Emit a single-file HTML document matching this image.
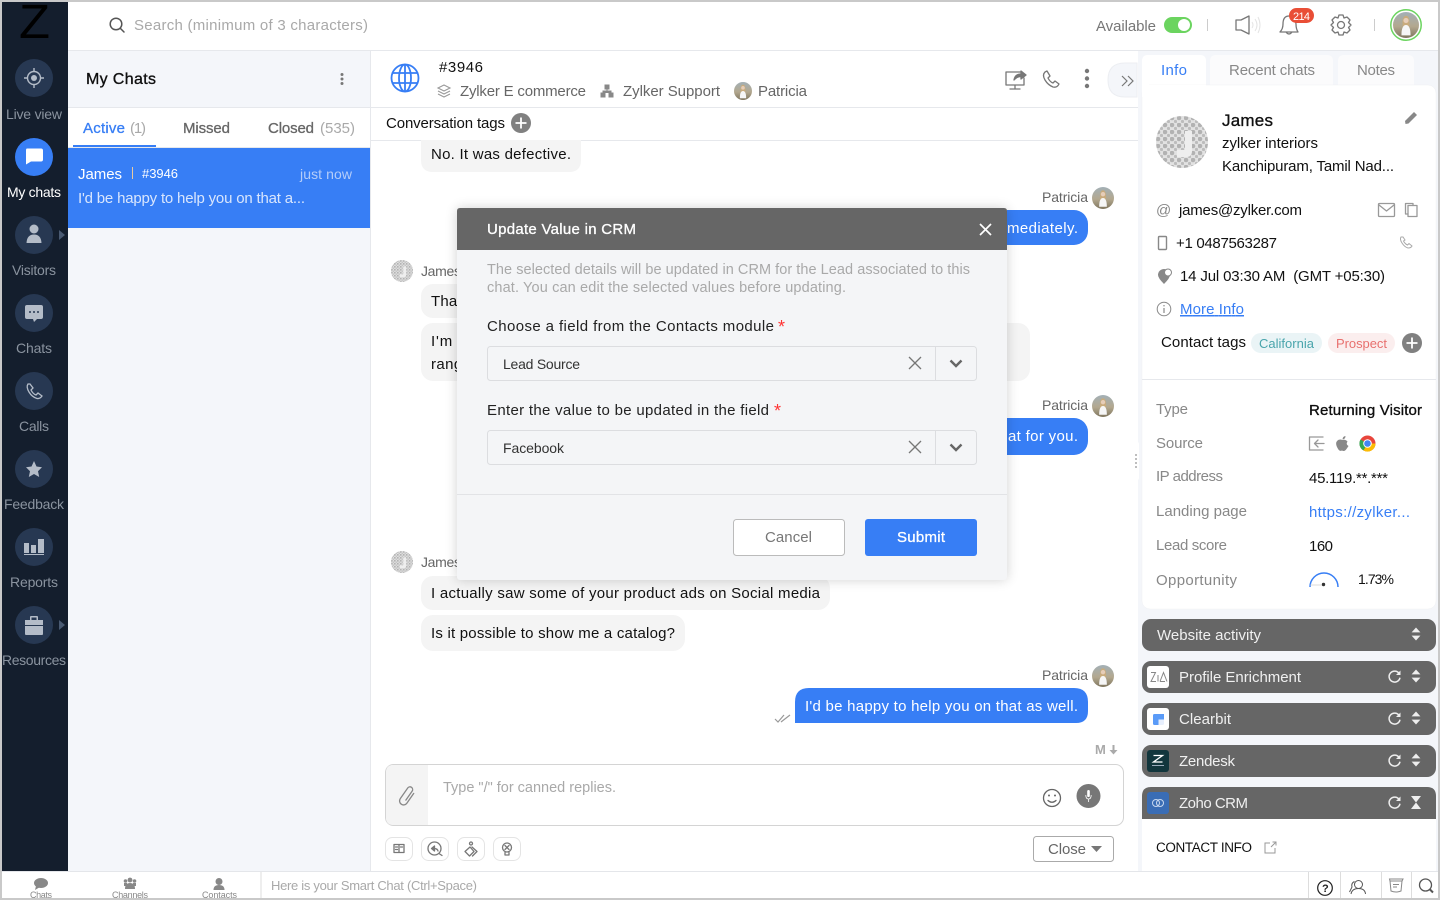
<!DOCTYPE html>
<html lang="en"><head><meta charset="utf-8"><title>My Chats</title>
<style>
html,body{margin:0;padding:0;background:#fff;width:1440px;height:900px;overflow:hidden}
svg{display:block;font-family:"Liberation Sans",sans-serif;font-size:15px;fill:#111}
text{white-space:pre}
.m{stroke:currentColor;stroke-width:.3}
.g{fill:#888}.d{fill:#666}.l{fill:#a9a9a9}.w{fill:#fff}.b{fill:#377ef5}
.n{fill:#8a939f;font-size:14px}
.s{font-size:14px}
.ic{fill:none;stroke:#777;stroke-width:1.3;stroke-linecap:round;stroke-linejoin:round}
.nf{fill:#b4bcc8}
</style></head><body>
<svg width="1440" height="900" viewBox="0 0 1440 900" xmlns="http://www.w3.org/2000/svg">
<defs>
<filter id="sh" x="-10%" y="-10%" width="120%" height="120%"><feGaussianBlur stdDeviation="6"/></filter>
<pattern id="dots" width="7" height="7" patternUnits="userSpaceOnUse"><rect width="7" height="7" fill="#e2e2e2"/><circle cx="2" cy="2" r="2.300" fill="#b2b2b2"/><circle cx="5.500" cy="5.500" r="1.600" fill="#bcbcbc"/></pattern>
<linearGradient id="pg" x1="0" y1="0" x2="0" y2="1"><stop offset="0" stop-color="#a3b0b6"/><stop offset=".55" stop-color="#b3a88f"/><stop offset="1" stop-color="#80765f"/></linearGradient>
<symbol id="pat" viewBox="0 0 20 20"><circle cx="10" cy="10" r="10" fill="url(#pg)"/><path d="M7.300 8Q7.500 3 10 3T12.700 8L12.500 11.500H7.500Z" fill="#c9ab7c"/><circle cx="10" cy="6.500" r="2" fill="#e6cdb8"/><path d="M6.500 18Q6.500 10 10 10T13.500 18Z" fill="#f6f6f6"/></symbol>
<symbol id="jam" viewBox="0 0 52 52"><circle cx="26" cy="26" r="26" fill="url(#dots)"/><path d="M29 15h7v20q0 6-6 6h-9v-7h8z" fill="#eee"/></symbol>
<g id="sort"><path d="M0-6.500 4.400-1.600H-4.400Z M0 6.500 4.400 1.600H-4.400Z" fill="#eee"/></g>
<g id="ref"><path d="M4.800-2.800A5.500 5.500 0 1 0 5.500 1.200" fill="none" stroke="#eee" stroke-width="1.500"/><path d="M6-6V-1.500H1.500Z" fill="#eee"/></g>
<g id="plus"><circle r="10" fill="#808080"/><path d="M-5.500 0H5.500M0-5.500V5.500" stroke="#fff" stroke-width="1.800"/></g>
</defs>

<!-- base -->
<rect width="1440" height="900" fill="#fff"/>
<!-- left nav -->
<rect x="2" y="2" width="66" height="870" fill="#141e2d"/>
<text x="19" y="38" font-size="48" textLength="31" lengthAdjust="spacingAndGlyphs" fill="#000">Z</text>
<g fill="#273852">
<circle cx="34" cy="78" r="19"/><circle cx="34" cy="235" r="19"/><circle cx="34" cy="313" r="19"/><circle cx="34" cy="391" r="19"/><circle cx="34" cy="469" r="19"/><circle cx="34" cy="547" r="19"/><circle cx="34" cy="625" r="19"/>
</g>
<circle cx="34" cy="157" r="19" fill="#377ef5"/>
<!-- nav icons -->
<g fill="none" stroke="#b4bcc8" stroke-width="1.400"><circle cx="34" cy="78" r="6.500"/><path d="M34 68V72M34 84V88M24 78H28M40 78H44"/></g><circle cx="34" cy="78" r="3" fill="#b4bcc8"/>
<path d="M27 149H41Q43 149 43 151V160Q43 162 41 162H31L26 165V151Q26 149 27 149Z" fill="#fff" transform="translate(0,-.5)"/>
<circle cx="34" cy="229" r="4.500" class="nf"/><path d="M26.500 243Q27 234.500 34 234.500T41.500 243Z" class="nf"/>
<path d="M59 230 65 235 59 240Z" fill="#4a5a72"/>
<path d="M27 305H41Q43 305 43 307V317Q43 319 41 319H37L34 322 33 319H27Q25 319 25 317V307Q25 305 27 305Z" class="nf"/><g fill="#273852"><circle cx="30" cy="312" r="1"/><circle cx="34" cy="312" r="1"/><circle cx="38" cy="312" r="1"/></g>
<path d="M28 384Q26 387 29 392T37 398.500Q40 399 42 396L38 393 36 395Q33 394 31 390L33 388 30 384Z" fill="none" stroke="#b4bcc8" stroke-width="1.300"/>
<path d="M34 461 36.500 466.500 42 467.200 38 471.200 39.200 477 34 474 28.800 477 30 471.200 26 467.200 31.500 466.500Z" class="nf"/>
<g class="nf"><rect x="24" y="543" width="5" height="10"/><rect x="31" y="545" width="5" height="8"/><rect x="38" y="539" width="6" height="14"/><rect x="24" y="554" width="20" height="1"/></g>
<path d="M25 620H43V634Q43 635 42 635H26Q25 635 25 634Z M30 620V617Q30 616 31 616H37Q38 616 38 617V620H36.500V617.500H31.500V620Z" class="nf"/><rect x="25" y="625" width="18" height="1" fill="#273852"/>
<path d="M59 620 65 625 59 630Z" fill="#4a5a72"/>
<text x="6" y="119" textLength="56" class="n">Live view</text>
<text x="7" y="197" textLength="54" class="s w">My chats</text>
<text x="12" y="275" textLength="44" class="n">Visitors</text>
<text x="16" y="353" textLength="36" class="n">Chats</text>
<text x="19" y="431" textLength="30" class="n">Calls</text>
<text x="4" y="509" textLength="60" class="n">Feedback</text>
<text x="10" y="587" textLength="48" class="n">Reports</text>
<text x="2" y="665" textLength="64" class="n">Resources</text>

<!-- top bar -->
<rect x="68" y="2" width="1370" height="48" fill="#fff"/>
<rect x="68" y="50" width="1370" height="1" fill="#e6e8ec"/>
<g class="ic" style="stroke:#555;stroke-width:1.500"><circle cx="116" cy="24" r="5.800"/><path d="M120.500 28.500 124 32"/></g>
<text x="134" y="30" textLength="234" class="l">Search (minimum of 3 characters)</text>
<text x="1096" y="31" textLength="60" style="fill:#777">Available</text>
<rect x="1164" y="17" width="28" height="16" rx="8" fill="#6bd45f"/><circle cx="1184" cy="25" r="6" fill="#fff"/>
<rect x="1207" y="19" width="1" height="12" fill="#ccc"/><rect x="1374" y="19" width="1" height="12" fill="#ccc"/>
<path d="M1236 20H1241L1249 16V34L1241 30H1236Z" class="ic"/><path d="M1252 22Q1254 25 1252 28M1255 19Q1259 25 1255 31M1258 17Q1262 25 1258 33" fill="none" stroke="#e4e4e4"/>
<path d="M1280 32Q1283 29 1283 24Q1283 16 1289 16T1296 24Q1296 29 1298 32ZM1286 32Q1289 36 1292 32" class="ic"/>
<rect x="1289" y="8" width="25" height="15" rx="7.500" fill="#e94e36"/><text x="1293" y="20" font-size="11" textLength="17" class="w">214</text>
<g class="ic" stroke-width="1.400"><circle cx="1341" cy="25" r="3.500"/><path d="M1339 15H1343L1344 18 1347 17 1350 20 1348.500 22.500 1351 25 1348.500 27.500 1350 30 1347 33 1344 32 1343 35H1339L1338 32 1335 33 1332 30 1333.500 27.500 1331 25 1333.500 22.500 1332 20 1335 17 1338 18Z"/></g>
<circle cx="1406" cy="25" r="15.200" fill="#fff" stroke="#6bd45f" stroke-width="1.500"/><use href="#pat" x="1393" y="12" width="26" height="26"/>

<!-- my chats column -->
<rect x="68" y="51" width="302" height="821" fill="#f4f6fa"/>
<rect x="68" y="107" width="302" height="1" fill="#e6e8ec"/>
<rect x="68" y="108" width="302" height="39" fill="#fff"/>
<rect x="73" y="145" width="83" height="2" fill="#377ef5"/>
<rect x="68" y="147" width="302" height="1" fill="#e6e8ec"/>
<text x="86" y="84" font-size="16" textLength="70" class="m">My Chats</text>
<g fill="#777"><circle cx="342" cy="74.500" r="1.500"/><circle cx="342" cy="79" r="1.500"/><circle cx="342" cy="83.500" r="1.500"/></g>
<text x="83" y="133" textLength="42" class="b m" style="color:#377ef5">Active</text><text x="130" y="133" textLength="16" class="l">(1)</text>
<text x="183" y="133" textLength="47" class="d m" style="color:#666">Missed</text>
<text x="268" y="133" textLength="46" class="d m" style="color:#666">Closed</text><text x="320" y="133" textLength="35" class="l">(535)</text>
<rect x="68" y="148" width="302" height="80" fill="#377ef5"/>
<text x="78" y="179" textLength="44" class="w">James</text>
<rect x="132" y="167" width="1" height="12" fill="#e6c9a0"/>
<text x="142" y="178" font-size="13" textLength="36" class="w">#3946</text>
<text x="300" y="179" font-size="14" textLength="52" fill="#b5cdf9">just now</text>
<text x="78" y="203" textLength="227" fill="#d9e6fd">I'd be happy to help you on that a...</text>
<rect x="370" y="51" width="1" height="821" fill="#e6e8ec"/>

<!-- chat -->
<rect x="371" y="51" width="767" height="821" fill="#fff"/>
<rect x="371" y="107" width="767" height="1" fill="#e6e8ec"/>
<rect x="371" y="140" width="767" height="1" fill="#e6e8ec"/>
<g fill="none" stroke="#377ef5" stroke-width="1.800"><circle cx="405" cy="78" r="13.500"/><ellipse cx="405" cy="78" rx="6" ry="13.500"/><path d="M405 64.500V91.500M392 73H418M392 83H418"/></g>
<text x="439" y="72" textLength="44">#3946</text>
<g fill="none" stroke="#999" stroke-width="1.100"><path d="M444 85 450 88 444 91 438 88Z"/><path d="M438 91 444 94 450 91M438 94 444 97 450 94"/></g>
<text x="460" y="96" textLength="126" class="d">Zylker E commerce</text>
<path d="M605 85H609V89H605ZM601 93H605V97H601ZM609 93H613V97H609ZM607 89V91M603 93V91H611V93" fill="#888" stroke="#888"/>
<text x="623" y="96" textLength="97" class="d">Zylker Support</text>
<use href="#pat" x="734" y="82" width="18" height="18"/>
<text x="758" y="96" textLength="49" class="d">Patricia</text>
<text x="386" y="128" textLength="119">Conversation tags</text>
<use href="#plus" x="521" y="123"/>
<g class="ic" stroke-width="1.400"><path d="M1021 72H1006V85H1024V78M1010 89H1020M1015 85V89"/><path d="M1014 80Q1015 74 1021 74V71L1026 75 1021 79V76.500Q1017 76.500 1014 80Z" fill="#777"/></g>
<path d="M1045 72Q1042 75 1045 80T1053 87Q1057 88 1059 84L1055 81 1053 83Q1050 82 1048 78L1050 76 1047 71Z" class="ic"/>
<g fill="#777"><circle cx="1087" cy="71" r="2.200"/><circle cx="1087" cy="78.500" r="2.200"/><circle cx="1087" cy="86" r="2.200"/></g>

<!-- messages -->
<path d="M421 140H581V160Q581 172 569 172H433Q421 172 421 160Z" fill="#f4f4f4"/>
<text x="431" y="159" textLength="140">No. It was defective.</text>
<text x="1042" y="202" textLength="46" class="s d">Patricia</text><use href="#pat" x="1092" y="187" width="22" height="22"/>
<rect x="900" y="210" width="188" height="35" rx="14" fill="#377ef5"/>
<text x="1007" y="233" textLength="71" class="w">mediately.</text>
<use href="#jam" x="391" y="260" width="22" height="22"/><text x="421" y="276" textLength="40" class="s d">James</text>
<rect x="421" y="284" width="200" height="34" rx="12" fill="#f4f4f4"/>
<text x="431" y="306" textLength="50">Thanks</text>
<rect x="421" y="323" width="609" height="58" rx="12" fill="#f4f4f4"/>
<text x="431" y="346" textLength="90">I'm planning</text>
<text x="431" y="369" textLength="40">range</text>
<text x="1042" y="410" textLength="46" class="s d">Patricia</text><use href="#pat" x="1092" y="395" width="22" height="22"/>
<rect x="900" y="418" width="188" height="37" rx="14" fill="#377ef5"/>
<text x="1008" y="441" textLength="70" class="w">at for you.</text>
<use href="#jam" x="391" y="551" width="22" height="22"/><text x="421" y="567" textLength="40" class="s d">James</text>
<rect x="421" y="576" width="409" height="34" rx="12" fill="#f4f4f4"/>
<text x="431" y="598" textLength="389">I actually saw some of your product ads on Social media</text>
<rect x="421" y="615" width="264" height="36" rx="12" fill="#f4f4f4"/>
<text x="431" y="638" textLength="244">Is it possible to show me a catalog?</text>
<text x="1042" y="680" textLength="46" class="s d">Patricia</text><use href="#pat" x="1092" y="665" width="22" height="22"/>
<path d="M795 702Q795 688 809 688H1074Q1088 688 1088 702V711Q1088 723 1076 723H795Z" fill="#377ef5"/>
<text x="805" y="711" textLength="273" class="w">I'd be happy to help you on that as well.</text>
<path d="M775 719 778 722 784 715M781 722 790 715" fill="none" stroke="#999" stroke-width="1.200"/>
<text x="1095" y="754" font-size="13" textLength="13" font-weight="bold" fill="#aaa">M</text>
<path d="M1113.500 745V751" stroke="#aaa" stroke-width="2"/><path d="M1109.500 750H1117.500L1113.500 754.500Z" fill="#aaa"/>

<!-- input -->
<rect x="385.500" y="764.500" width="738" height="61" rx="8" fill="#fff" stroke="#d4d4d4"/>
<path d="M428 765H393.500Q386 765 386 772.500V817.500Q386 825 393.500 825H428Z" fill="#f4f4f4"/>
<path d="M411 790V802a4 4 0 0 1-8 0V789a2.700 2.700 0 0 1 5.400 0V800" transform="rotate(35 407 796)" class="ic" style="stroke:#888"/>
<text x="443" y="792" font-size="14.500" textLength="173" class="l">Type "/" for canned replies.</text>
<g class="ic" style="stroke:#666"><circle cx="1052" cy="798" r="8.500"/><path d="M1048 800.500Q1052 804 1056 800.500"/></g><circle cx="1049" cy="795.500" r="1" fill="#666"/><circle cx="1055" cy="795.500" r="1" fill="#666"/>
<circle cx="1088.500" cy="796" r="12" fill="#777"/><rect x="1087.200" y="790" width="2.600" height="7" rx="1.300" fill="#fff"/><path d="M1085.800 795Q1085.800 799 1088.500 799T1091.200 795M1088.500 799V802" fill="none" stroke="#fff" stroke-width=".8"/>
<g fill="#fff" stroke="#e4e4e4"><rect x="385.500" y="837.500" width="27" height="23" rx="7"/><rect x="421.500" y="837.500" width="27" height="23" rx="7"/><rect x="457.500" y="837.500" width="27" height="23" rx="7"/><rect x="493.500" y="837.500" width="27" height="23" rx="7"/></g>
<path d="M394 844.500H399V852.500H394ZM399 844.500H404V852.500H399ZM395.500 847H397.500M395.500 849.500H397.500M400.500 847H402.500" class="ic" stroke-width="1"/>
<g class="ic"><circle cx="434.500" cy="848.500" r="6.500"/><path d="M439 853.500 442 855.500M431.500 848.500 434.500 846V851ZM434.500 848.500Q437.500 848.500 438 851" fill="#777"/></g>
<g class="ic" stroke-width="1.100"><circle cx="471" cy="843.500" r="1.500"/><path d="M470 847 465 851.500 469.500 856 474 851.500ZM472 847 477 851.500 472.500 856"/></g>
<g class="ic" stroke-width="1.100"><circle cx="507" cy="847.500" r="4.500"/><path d="M505 852.500V855H509V852.500M505 845.500 509 849.500M509 845.500 505 849.500"/></g>
<rect x="1033.500" y="836.500" width="80" height="25" rx="3" fill="#fff" stroke="#aaa"/>
<text x="1048" y="854" textLength="38" class="d">Close</text><path d="M1091 846H1102L1096.500 852Z" fill="#777"/>

<!-- right panel -->
<rect x="1138" y="51" width="300" height="821" fill="#f4f6fa"/>
<path d="M1137 63H1125Q1108 63 1108 80T1125 97H1137Z" fill="#f4f6fa" stroke="#eceef2"/>
<path d="M1122 76 1127 81 1122 86M1128 76 1133 81 1128 86" fill="none" stroke="#777" stroke-width="1.200"/>
<path d="M1142 85V61Q1142 55 1148 55H1200Q1206 55 1206 61V85Z" fill="#fff"/>
<path d="M1210 85V61Q1210 55 1216 55H1327Q1333 55 1333 61V85Z" fill="#fbfbfc"/>
<path d="M1338 85V61Q1338 55 1344 55H1408Q1414 55 1414 61V85Z" fill="#fbfbfc"/>
<text x="1161" y="75" textLength="26" class="b">Info</text>
<text x="1229" y="75" textLength="86" class="g">Recent chats</text>
<text x="1357" y="75" textLength="38" class="g">Notes</text>
<rect x="1142" y="85" width="294" height="524" rx="8" fill="#fff" stroke="#f0f1f4" stroke-width=".5"/>
<rect x="1142" y="85" width="64" height="12" fill="#fff"/>
<use href="#jam" x="1156" y="116" width="52" height="52"/>
<text x="1222" y="126" font-size="17" textLength="51" class="m">James</text>
<text x="1222" y="148" textLength="96">zylker interiors</text>
<text x="1222" y="171" textLength="172">Kanchipuram, Tamil Nad...</text>
<path d="M1405 122 1405.500 125 1408.500 124.500 1417 116 1414 113Z" fill="#888" transform="translate(0,-1)"/>
<text x="1156" y="215" textLength="14" class="g">@</text>
<text x="1179" y="215" textLength="123">james@zylker.com</text>
<g class="ic" style="stroke:#999"><rect x="1378.500" y="203.500" width="16" height="13" rx="1"/><path d="M1379 205 1386.500 211 1394 205"/><rect x="1408" y="205.500" width="9" height="11"/><path d="M1408 214H1405.500V203.500H1413V205.500"/></g>
<rect x="1158.500" y="236.500" width="8" height="13" rx="1" fill="none" stroke="#888" stroke-width="1.400"/>
<text x="1176" y="248" textLength="101">+1 0487563287</text>
<path d="M1401 237Q1399.500 239 1402 243T1408 248Q1411 248 1412 246L1409 243.500 1407.500 245Q1405 244 1403.500 241L1405 240 1403 237Z" fill="none" stroke="#aaa"/>
<path d="M1164 284Q1158 278 1158 275A6 6 0 0 1 1170 275Q1170 278 1164 284Z" fill="#888"/><circle cx="1168" cy="272.500" r="3.500" fill="#fff" stroke="#888"/>
<text x="1180" y="281" textLength="205">14 Jul 03:30 AM  (GMT +05:30)</text>
<circle cx="1164" cy="309" r="6.800" fill="none" stroke="#888"/><path d="M1164 308V313M1164 305V306.400" stroke="#888" stroke-width="1.200"/>
<text x="1180" y="314" textLength="64" class="b" text-decoration="underline">More Info</text>
<text x="1161" y="347" textLength="85">Contact tags</text>
<rect x="1251" y="333" width="71" height="20" rx="10" fill="#eaf4f6"/><text x="1259" y="348" font-size="13" textLength="55" fill="#4aa5ac">California</text>
<rect x="1328" y="333" width="67" height="20" rx="10" fill="#fbeeee"/><text x="1336" y="348" font-size="13" textLength="51" fill="#e8716f">Prospect</text>
<use href="#plus" x="1412" y="343"/>
<rect x="1142" y="379" width="294" height="1" fill="#e6e8ec"/>
<text x="1156" y="414" textLength="32" class="g">Type</text>
<text x="1156" y="448" textLength="47" class="g">Source</text>
<text x="1156" y="481" textLength="67" class="g">IP address</text>
<text x="1156" y="516" textLength="91" class="g">Landing page</text>
<text x="1156" y="550" textLength="71" class="g">Lead score</text>
<text x="1156" y="585" textLength="81" class="g">Opportunity</text>
<text x="1309" y="415" textLength="113" class="m">Returning Visitor</text>
<path d="M1323 437H1309.500V450H1323M1324 443.500H1314.500M1318 440 1314.500 443.500 1318 447" class="ic" stroke-width="1" style="stroke:#999"/>
<path d="M1342.500 440Q1339 438.500 1337 441T1337.500 448Q1339.500 452 1342 450.500Q1344.500 452 1346.500 449T1348.500 446Q1345.500 444.500 1347.500 441.500Q1345.500 439 1342.500 440ZM1342.500 439.500Q1342.500 436.500 1345.500 436Q1345.500 439 1342.500 439.500Z" fill="#888"/>
<circle cx="1367.500" cy="443.500" r="8" fill="#e8453c"/><path d="M1367.500 443.500 1360.500 439.500A8 8 0 0 0 1363.500 450.500Z" fill="#34a853"/><path d="M1367.500 443.500 1363.500 450.500A8 8 0 0 0 1375.500 443.500Z" fill="#fbbc05"/><circle cx="1367.500" cy="443.500" r="3.800" fill="#4285f4" stroke="#fff"/>
<text x="1309" y="483" textLength="79">45.119.**.***</text>
<text x="1309" y="517" textLength="101" class="b">https://zylker...</text>
<text x="1309" y="551" textLength="24">160</text>
<path d="M1310 587A14 14 0 0 1 1338 587" fill="none" stroke="#377ef5" stroke-width="1.500"/><circle cx="1323.500" cy="584.500" r="1.700" fill="#333"/><path d="M1310 585H1322" stroke="#ccc" stroke-width=".7"/>
<rect x="1308" y="587" width="32" height="3" fill="#fff"/>
<text x="1358" y="584" font-size="14" textLength="36">1.73%</text>
<rect x="1133" y="442" width="6" height="38" rx="2" fill="#fff"/><g fill="#aaa"><circle cx="1136" cy="455" r="1"/><circle cx="1136" cy="459" r="1"/><circle cx="1136" cy="463" r="1"/><circle cx="1136" cy="467" r="1"/></g>

<!-- integration cards -->
<g fill="#666"><rect x="1142" y="619" width="294" height="32" rx="9"/><rect x="1142" y="661" width="294" height="32" rx="9"/><rect x="1142" y="703" width="294" height="32" rx="9"/><rect x="1142" y="745" width="294" height="32" rx="9"/><path d="M1142 819V796Q1142 787 1151 787H1427Q1436 787 1436 796V819Z"/></g>
<rect x="1142" y="819" width="294" height="53" fill="#fff"/>
<g fill="#f0f0f0">
<text x="1157" y="640" textLength="104">Website activity</text>
<text x="1179" y="682" textLength="122">Profile Enrichment</text>
<text x="1179" y="724" textLength="52">Clearbit</text>
<text x="1179" y="766" textLength="56">Zendesk</text>
<text x="1179" y="808" textLength="69">Zoho CRM</text>
</g>
<use href="#sort" x="1416" y="634"/><use href="#sort" x="1416" y="676"/><use href="#sort" x="1416" y="718"/><use href="#sort" x="1416" y="760"/>
<path d="M1411 796H1421L1416 802.500 1421 809H1411L1416 802.500Z" fill="#eee"/>
<use href="#ref" x="1394.500" y="676.500"/><use href="#ref" x="1394.500" y="718.500"/><use href="#ref" x="1394.500" y="760.500"/><use href="#ref" x="1394.500" y="802.500"/>
<rect x="1147" y="666" width="22" height="22" rx="3" fill="#fff"/><path d="M1151 672.500H1155.500L1151 681.500H1156M1158 675V681.500M1160 681.500 1163.500 672.500 1167 681.500M1160 681.500H1165" fill="none" stroke="#888"/>
<rect x="1147" y="708" width="22" height="22" rx="3" fill="#fff"/><rect x="1153" y="714" width="11" height="11" rx="1.500" fill="#e7effd"/><path d="M1153 715.500Q1153 714 1154.500 714H1164V719.500H1158.500V725H1154.500Q1153 725 1153 723.500Z" fill="#5a9bf8"/>
<rect x="1147" y="750" width="22" height="22" rx="3" fill="#12363d"/><path d="M1153.500 755.500H1162.500L1153.500 762H1162.500" fill="none" stroke="#fff" stroke-width="1.300"/><rect x="1152" y="765" width="12" height="1" fill="#9ab"/>
<rect x="1147" y="792" width="22" height="22" rx="3" fill="#3a6db5"/><g fill="none" stroke="#c8d8ef"><circle cx="1156" cy="803" r="3.500"/><circle cx="1160" cy="803" r="3.500"/></g>
<text x="1156" y="852" font-size="13.500" textLength="96">CONTACT INFO</text>
<path d="M1270 843H1265V853H1275V848M1271 847 1276 842M1272.500 842H1276V845.500" fill="none" stroke="#999"/>

<!-- bottom bar -->
<rect x="2" y="871" width="1436" height="1" fill="#e4e6ea"/>
<rect x="2" y="872" width="1436" height="26" fill="#fff"/>
<rect x="260" y="872" width="2" height="26" fill="#eee"/>
<rect x="1308" y="872" width="1" height="26" fill="#ddd"/><rect x="1340" y="872" width="1" height="26" fill="#ddd"/><rect x="1381" y="872" width="1" height="26" fill="#ddd"/><rect x="1411" y="872" width="1" height="26" fill="#ddd"/>
<ellipse cx="41" cy="883" rx="7" ry="5" fill="#888"/><path d="M36 886 35 890 40 887Z" fill="#888"/>
<g fill="#888"><circle cx="130" cy="880" r="2.400"/><circle cx="125.500" cy="881" r="1.800"/><circle cx="134.500" cy="881" r="1.800"/><path d="M125 889Q125 883 130 883T135 889Z"/><rect x="124" y="883" width="3" height="3"/><rect x="133" y="883" width="3" height="3"/></g>
<g fill="#888"><circle cx="219" cy="881.500" r="3.500"/><path d="M213.500 890Q213.500 885 219 885T224.500 890Z"/></g>
<text x="30" y="898" font-size="9" textLength="22" class="g">Chats</text>
<text x="112" y="898" font-size="9" textLength="36" class="g">Channels</text>
<text x="202" y="898" font-size="9" textLength="35" class="g">Contacts</text>
<text x="271" y="890" font-size="13" textLength="206" class="l">Here is your Smart Chat (Ctrl+Space)</text>
<circle cx="1325" cy="888" r="7.300" fill="none" stroke="#222" stroke-width="1.200"/><text x="1322" y="892" font-size="11" font-weight="bold" fill="#222">?</text>
<g fill="none" stroke="#555"><circle cx="1358.500" cy="884.500" r="4"/><path d="M1351 894Q1352 888.500 1358.500 888.500T1365.500 894M1354.500 881.500Q1351 883 1352 887L1349.500 892"/></g>
<g fill="none" stroke="#888"><path d="M1390 881H1402L1401 891Q1396 893 1391 891Z"/><path d="M1390 881 1389.500 879H1403L1402 881M1393 884.500H1399M1393 887H1397"/></g>
<circle cx="1425.500" cy="885" r="6" fill="none" stroke="#555" stroke-width="1.300"/><path d="M1430 889.500 1433 892.500" stroke="#555" stroke-width="2"/>

<!-- modal -->
<rect x="457" y="208" width="550" height="372" rx="3" fill="#000" opacity=".18" filter="url(#sh)"/>
<rect x="457" y="208" width="550" height="372" rx="3" fill="#f4f5f7"/>
<path d="M457 250V211Q457 208 460 208H1004Q1007 208 1007 211V250Z" fill="#666"/>
<text x="487" y="234" textLength="149" class="w m" style="color:#fff">Update Value in CRM</text>
<path d="M980 224 991 235M991 224 980 235" stroke="#fff" stroke-width="1.700"/>
<text x="487" y="274" font-size="14.500" textLength="483" class="l">The selected details will be updated in CRM for the Lead associated to this</text>
<text x="487" y="292" font-size="14.500" textLength="359" class="l">chat. You can edit the selected values before updating.</text>
<text x="487" y="331" textLength="287" fill="#222">Choose a field from the Contacts module</text>
<text x="778" y="333" font-size="18" fill="#f33">*</text>
<rect x="487.500" y="346.500" width="489" height="34" rx="3" fill="#f4f5f7" stroke="#dcdde0"/><rect x="935" y="347" width="1" height="33" fill="#dcdde0"/>
<text x="503" y="369" font-size="14" textLength="77" fill="#333">Lead Source</text>
<path d="M909 357 921 369M921 357 909 369" stroke="#777" stroke-width="1.300"/>
<path d="M950.500 360.500 956 366 961.500 360.500" fill="none" stroke="#666" stroke-width="2.400"/>
<text x="487" y="415" textLength="282" fill="#222">Enter the value to be updated in the field</text>
<text x="774" y="417" font-size="18" fill="#f33">*</text>
<rect x="487.500" y="430.500" width="489" height="34" rx="3" fill="#f4f5f7" stroke="#dcdde0"/><rect x="935" y="431" width="1" height="33" fill="#dcdde0"/>
<text x="503" y="453" font-size="14" textLength="61" fill="#333">Facebook</text>
<path d="M909 441 921 453M921 441 909 453" stroke="#777" stroke-width="1.300"/>
<path d="M950.500 444.500 956 450 961.500 444.500" fill="none" stroke="#666" stroke-width="2.400"/>
<rect x="457" y="494" width="550" height="1" fill="#e2e3e6"/>
<rect x="733.500" y="519.500" width="111" height="36" rx="3" fill="#fff" stroke="#bbb"/>
<text x="765" y="542" textLength="47" fill="#777">Cancel</text>
<rect x="865" y="519" width="112" height="37" rx="3" fill="#377ef5"/>
<text x="897" y="542" textLength="48" class="w m" style="color:#fff">Submit</text>

<!-- frame -->
<g fill="#c9c9c9"><rect width="1440" height="2"/><rect y="898" width="1440" height="2"/><rect width="2" height="900"/><rect x="1438" width="2" height="900"/></g>
</svg>
</body></html>
